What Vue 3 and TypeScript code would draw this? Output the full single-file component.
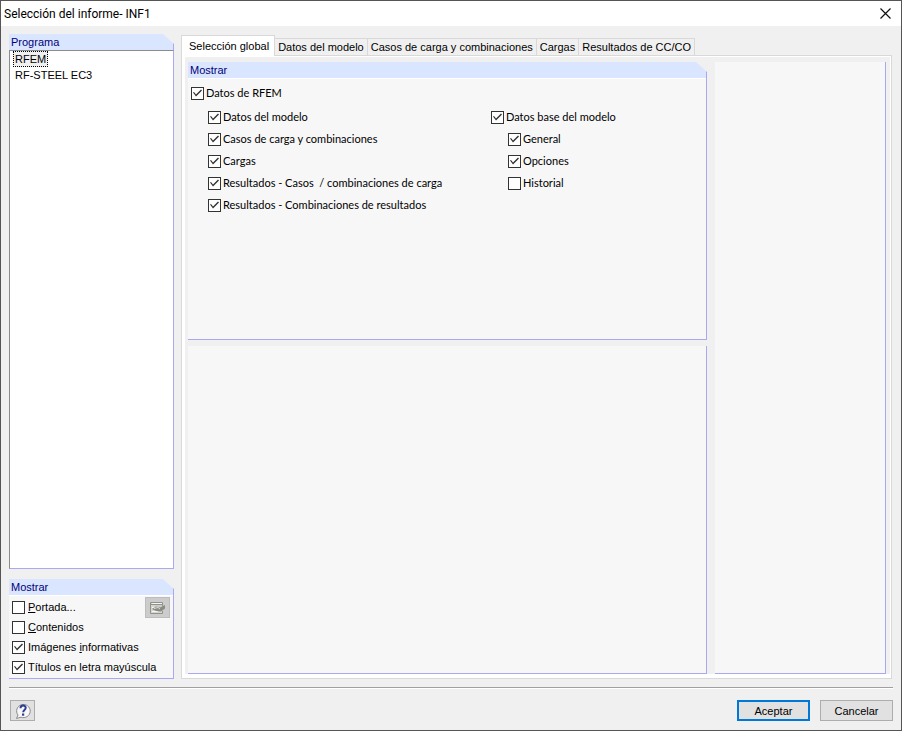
<script setup lang="ts">
import { ref } from 'vue'

interface Option {
  id: string
  before: string
  key?: string
  after?: string
  checked: boolean
}

const programs = ['RFEM', 'RF-STEEL EC3']
const program = ref('RFEM')

const tabs = [
  'Selección global',
  'Datos del modelo',
  'Casos de carga y combinaciones',
  'Cargas',
  'Resultados de CC/CO',
]
const activeTab = ref(0)

const showAll = ref(true)

const sections = ref<Option[]>([
  { id: 'model', before: 'Datos del modelo', checked: true },
  { id: 'cases', before: 'Casos de carga y combinaciones', checked: true },
  { id: 'loads', before: 'Cargas', checked: true },
  { id: 'results-cases', before: 'Resultados - Casos  / combinaciones de carga', checked: true },
  { id: 'results-combos', before: 'Resultados - Combinaciones de resultados', checked: true },
])

const baseData = ref<Option[]>([
  { id: 'base', before: 'Datos base del modelo', checked: true },
  { id: 'general', before: 'General', checked: true },
  { id: 'options', before: 'Opciones', checked: true },
  { id: 'history', before: 'Historial', checked: false },
])

const display = ref<Option[]>([
  { id: 'cover', before: '', key: 'P', after: 'ortada...', checked: false },
  { id: 'contents', before: '', key: 'C', after: 'ontenidos', checked: false },
  { id: 'images', before: 'Imágenes ', key: 'i', after: 'nformativas', checked: true },
  { id: 'titles', before: 'Títulos en letra mayúscula', checked: true },
])
</script>

<template>
  <div class="window">
    <header class="titlebar">
      <h1>Selección del informe- INF1</h1>
      <button class="close" type="button" aria-label="Cerrar">
        <svg width="11" height="11" viewBox="0 0 11 11"><path d="M.5 .5L10.500 10.500M10.500 .5L.5 10.500" fill="none" stroke="#111" stroke-width="1.2" /></svg>
      </button>
    </header>

    <main class="content">
      <aside class="sidebar">
        <section class="group grow">
          <h2>Programa</h2>
          <ul class="list">
            <li v-for="name in programs" :key="name">
              <button type="button" :class="{ selected: name === program }" @click="program = name">{{ name }}</button>
            </li>
          </ul>
        </section>

        <section class="group">
          <h2>Mostrar</h2>
          <div class="body display">
            <div class="checks">
              <label v-for="item in display" :key="item.id" class="check">
                <input v-model="item.checked" type="checkbox">
                <span>{{ item.before }}<u v-if="item.key">{{ item.key }}</u>{{ item.after }}</span>
              </label>
            </div>
            <button class="tool" type="button" disabled aria-label="Editar portada">
              <svg width="18" height="16" viewBox="0 0 18 16">
                <path d="M1.500 2.500H13.500V6M1.500 2.500V13.500H13.500V11" fill="#d6d6d0" stroke="#92928c" />
                <path d="M2 4.500H14" stroke="#92928c" />
                <path d="M3 3.500H13" stroke="#f4f4f0" />
                <path d="M3 7.500H6M3 11.500H9" stroke="#f4f4f0" />
                <path d="M3 9L7 6.500L11 7.500L16 5V8.500L12 11.500L7 11Z" fill="#8b8b85" />
                <path d="M5 8.500L9 7.500L11 9" fill="none" stroke="#dcdcd6" />
              </svg>
            </button>
          </div>
        </section>
      </aside>

      <section class="tabbed">
        <nav class="tabs" role="tablist">
          <button
            v-for="(tab, i) in tabs"
            :key="tab"
            type="button"
            role="tab"
            :aria-selected="i === activeTab"
            :class="{ active: i === activeTab }"
            @click="activeTab = i"
          >{{ tab }}</button>
        </nav>
        <div class="pane">
          <div class="pane-inner">
            <div class="column">
              <section class="group upper">
                <h2>Mostrar</h2>
                <div class="body selection">
                  <label class="check">
                    <input v-model="showAll" type="checkbox">
                    <span>Datos de RFEM</span>
                  </label>
                  <div class="tree">
                    <div class="branch">
                      <label v-for="item in sections" :key="item.id" class="check">
                        <input v-model="item.checked" type="checkbox">
                        <span>{{ item.before }}</span>
                      </label>
                    </div>
                    <div class="branch nested">
                      <label v-for="item in baseData" :key="item.id" class="check">
                        <input v-model="item.checked" type="checkbox">
                        <span>{{ item.before }}</span>
                      </label>
                    </div>
                  </div>
                </div>
              </section>
              <section class="blank lower"></section>
            </div>
            <section class="blank side"></section>
          </div>
        </div>
      </section>
    </main>

    <footer class="footer">
      <button class="tool help" type="button" aria-label="Ayuda">
        <svg width="18" height="18" viewBox="0 0 18 18">
          <path d="M2.500 16.500L4 13A6.800 6.600 0 1 1 7 15.200Z" fill="#f7f7f7" stroke="#8a8a8a" />
          <path d="M6.500 6.200C6.500 2.600 12 2.800 11.700 6C11.500 8 9.200 8 9.200 10.200" fill="none" stroke="#2c3f96" stroke-width="2" />
          <rect x="8" y="11.500" width="2.200" height="2.200" fill="#2c3f96" />
        </svg>
      </button>
      <div class="actions">
        <button class="action primary" type="button">Aceptar</button>
        <button class="action" type="button">Cancelar</button>
      </div>
    </footer>
  </div>
</template>

<style>
body {
  margin: 0;
}
</style>

<style scoped>
* {
  box-sizing: border-box;
}

.window {
  display: flex;
  flex-direction: column;
  min-height: 100vh;
  border: 1px solid #555;
  background: #f0f0f0;
  color: #000;
  font: 11px/16px "Liberation Sans", Arial, sans-serif;
}

button {
  margin: 0;
  padding: 0;
  border: 0;
  background: none;
  color: inherit;
  font: inherit;
}

.titlebar {
  display: flex;
  align-items: center;
  justify-content: space-between;
  height: 25px;
  padding: 0 10px 0 3px;
  background: #fff;
}

h1 {
  margin: 0;
  font: 12px/24px Roboto, "Noto Sans", sans-serif;
}

.close {
  display: flex;
}

.content {
  display: flex;
  flex: 1;
  gap: 7px;
  padding: 8px 9px 8px 8px;
}

.sidebar {
  display: flex;
  flex-direction: column;
  gap: 10px;
  width: 165px;
}

.group {
  display: flex;
  flex-direction: column;
}

.grow {
  flex: 1;
}

h2 {
  margin: 0;
  padding-left: 2px;
  border-right: 1px solid #a9a9f2;
  background: #dae6ff;
  color: #00007b;
  font: 11px/16px "Liberation Sans", Arial, sans-serif;
  clip-path: polygon(0 0, calc(100% - 11px) 0, 100% 10px, 100% 100%, 0 100%);
}

.list {
  flex: 1;
  margin: 0;
  padding: 0 3px;
  border: 1px solid #8c8c8c;
  border-right-color: #a9a9f2;
  border-bottom-color: #a9a9f2;
  background: #fff;
  list-style: none;
}

.list li {
  display: flex;
}

.list button {
  padding: 0 1px;
  border: 1px solid transparent;
  line-height: 14px;
}

.list .selected {
  border: 1px dotted #000;
  background: #f0f0f0;
}

.body,
.blank {
  border: 0 solid #a9a9f2;
  border-width: 0 1px 1px 0;
  background: #f7f7f7;
}

.body {
  flex: 1;
  box-shadow: inset 0 1px #fff;
}

.display {
  display: flex;
  align-items: flex-start;
  padding: 2px 3px 1px;
}

.checks {
  flex: 1;
  min-width: 0;
}

.check {
  display: flex;
  align-items: center;
  gap: 3px;
  white-space: pre;
}

.display .check {
  height: 20px;
}

.check input {
  display: block;
  flex: none;
  width: 13px;
  height: 13px;
  margin: 0;
  border: 1px solid #333;
  background: #fff;
  appearance: none;
}

.check input:checked::before {
  display: block;
  width: 11px;
  height: 11px;
  background: #333;
  clip-path: polygon(1px 5px, 2px 4.500px, 4px 7px, 9px 2px, 10px 3px, 4px 9px);
  content: "";
}

.tool {
  display: flex;
  flex: none;
  align-items: center;
  justify-content: center;
  width: 25px;
  height: 21px;
  border: 1px solid #bdbdbd;
  background: #ccc;
}

.help {
  border-color: #adadad;
  background: #e1e1e1;
}

.tabbed {
  display: flex;
  flex: 1;
  flex-direction: column;
}

.tabs {
  display: flex;
  align-items: flex-end;
  height: 20px;
  margin-top: 1px;
}

.tabs button {
  height: 17px;
  padding: 0 3px;
  border: 1px solid #d9d9d9;
  border-width: 1px 1px 0 0;
  line-height: 16px;
}

.tabs .active {
  z-index: 1;
  height: 21px;
  margin-bottom: -1px;
  padding: 0 5px 0 7px;
  border-left-width: 1px;
  background: #fff;
  line-height: 16px;
}

.pane {
  display: flex;
  flex: 1;
  padding: 1px 1px 4px 3px;
  border: 1px solid #d9d9d9;
  background: #fff;
}

.pane-inner {
  display: flex;
  flex: 1;
  gap: 8px;
  padding: 5px 4px 0 3px;
  background: #f0f0f0;
}

.column {
  display: grid;
  flex: 1;
  grid-template-rows: 17fr 20fr;
  gap: 6px;
}

.side {
  width: 171px;
}

.selection {
  padding: 4px 3px 0;
  font-family: Lato, "Noto Sans", sans-serif;
}

.selection .check {
  height: 22px;
  gap: 2px;
}

.tree {
  display: grid;
  grid-template-columns: 283px 1fr;
  margin-top: 2px;
  padding-left: 17px;
}

.nested .check + .check {
  padding-left: 17px;
}

.footer {
  display: flex;
  align-items: center;
  justify-content: space-between;
  height: 43px;
  margin: 0 8px;
  border-top: 1px solid #a0a0a0;
  box-shadow: inset 0 1px #fff;
  padding: 3px 0 0 1px;
}

.actions {
  display: flex;
  gap: 10px;
}

.action {
  width: 73px;
  height: 21px;
  border: 1px solid #adadad;
  background: #e1e1e1;
}

.primary {
  border: 2px solid #0078d7;
}
</style>
